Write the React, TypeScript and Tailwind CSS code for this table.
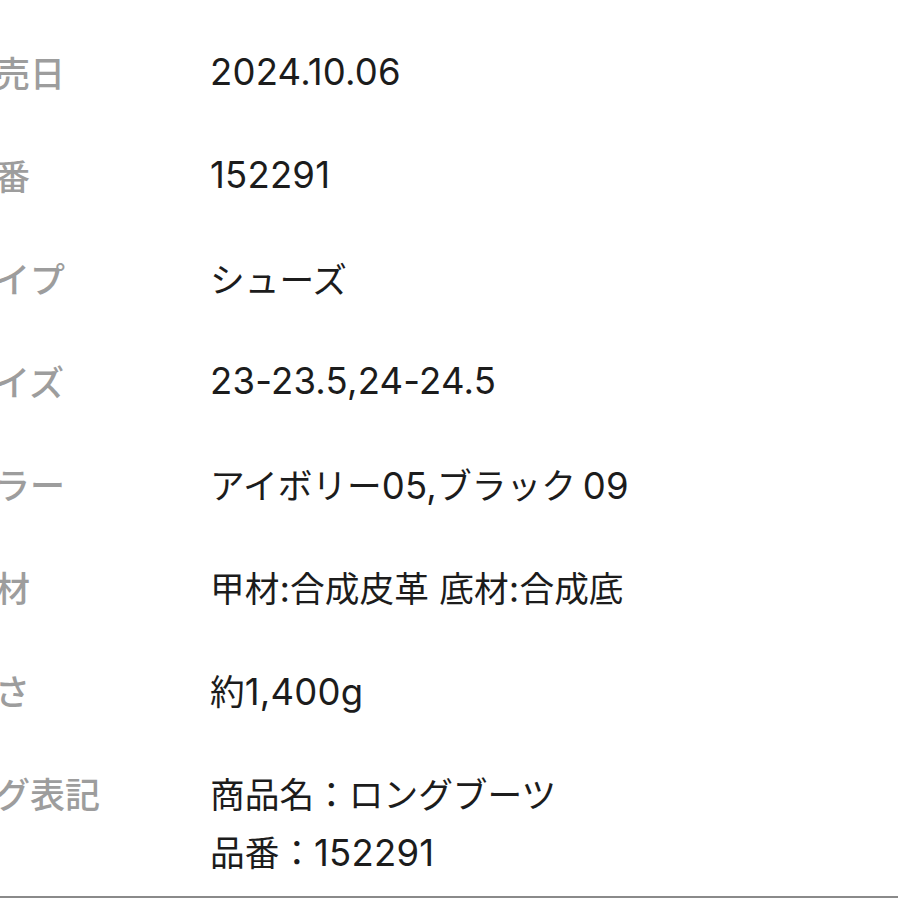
import React from "react";

const rows: { label: string; value: string[] }[] = [
  { label: "発売日", value: ["2024.10.06"] },
  { label: "品番", value: ["152291"] },
  { label: "タイプ", value: ["シューズ"] },
  { label: "サイズ", value: ["23-23.5,24-24.5"] },
  { label: "カラー", value: ["アイボリー05,ブラック\u200909"] },
  { label: "素材", value: ["甲材:合成皮革 底材:合成底"] },
  { label: "重さ", value: ["約1,400g"] },
  { label: "タグ表記", value: ["商品名：ロングブーツ", "品番：152291"] },
];

const cjk = /[\u3000-\u30ff\u4e00-\u9fff\uff00-\uffef]+/g;

function Mixed({ text }: { text: string }) {
  const parts: { t: string; c: boolean }[] = [];
  let last = 0;
  for (const m of text.matchAll(cjk)) {
    const idx = m.index ?? 0;
    if (idx > last) parts.push({ t: text.slice(last, idx), c: false });
    parts.push({ t: m[0], c: true });
    last = idx + m[0].length;
  }
  if (last < text.length) parts.push({ t: text.slice(last), c: false });
  return (
    <>
      {parts.map((p, i) =>
        p.c ? (
          <span key={i} className="text-[34.7px] font-['Noto_Sans_CJK_JP']">
            {p.t}
          </span>
        ) : (
          <span key={i} className="text-[36.5px] tracking-[0.2px]">
            {p.t}
          </span>
        )
      )}
    </>
  );
}

export default function App() {
  return (
    <div
      className="w-[898px] h-[898px] overflow-hidden bg-white"
      style={{ fontFamily: 'Inter, "Noto Sans CJK JP", sans-serif' }}
    >
      <div className="ml-[-40px] pt-[20px] border-b-2 border-[#8a8a8a] w-[938px]">
        {rows.map((r, i) => (
          <div
            key={i}
            className={`flex py-[22.5px] ${i === rows.length - 1 ? "pb-[16px]" : ""}`}
          >
            <div className="w-[250px] shrink-0 text-[35px] leading-[58px] text-[#9d9d9d] font-medium font-['Noto_Sans_CJK_JP']">
              {r.label}
            </div>
            <div className="leading-[58px] text-[#1c1c1c] whitespace-nowrap">
              {r.value.map((v, j) => (
                <div key={j} className="h-[58px]">
                  <Mixed text={v} />
                </div>
              ))}
            </div>
          </div>
        ))}
      </div>
    </div>
  );
}
